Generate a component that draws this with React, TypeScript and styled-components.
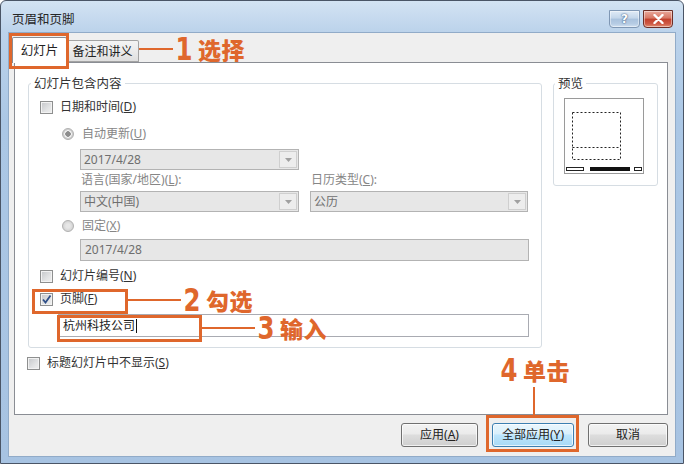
import styled, { createGlobalStyle } from 'styled-components'

const ORANGE = '#df672c'
const UI_FONT = '"Noto Sans", "Noto Sans CJK SC", sans-serif'
const CJK_FONT = '"Noto Sans CJK SC", sans-serif'

const GlobalStyle = createGlobalStyle`
  html, body {
    margin: 0;
    padding: 0;
    background: #ffffff;
  }
  body {
    font-family: ${UI_FONT};
  }
  * {
    box-sizing: border-box;
  }
`

const Window = styled.div`
  position: relative;
  width: 684px;
  height: 464px;
  display: flex;
  flex-direction: column;
  padding: 0 7px 6px 7px;
  border: 1px solid #4a5566;
  border-radius: 6px 6px 0 0;
  background: linear-gradient(180deg, #d3e3f3 0px, #bcd3eb 30px, #abc7e5 120px, #a7c3e2 100%);
`

const TitleBar = styled.div`
  height: 31px;
  display: flex;
  align-items: flex-start;
  padding: 0 3px 0 4px;
`

const Title = styled.div`
  flex: 1;
  margin-top: 10px;
  font-family: ${CJK_FONT};
  font-size: 12.5px;
  line-height: 16px;
  color: #262626;
`

const CaptionButtons = styled.div`
  display: flex;
  gap: 3px;
  margin-top: 9px;
`

const CaptionButton = styled.div<{ $close?: boolean }>`
  width: ${({ $close }) => ($close ? 30 : 31)}px;
  height: 18px;
  border-radius: 0 0 4px 4px;
  border: 1px solid ${({ $close }) => ($close ? '#6d2f27' : '#7f97b4')};
  display: flex;
  align-items: center;
  justify-content: center;
  background: ${({ $close }) =>
    $close
      ? 'linear-gradient(180deg, #eaa99b 0%, #d77764 45%, #c2402c 50%, #cf5a45 80%, #e18f73 100%)'
      : 'linear-gradient(180deg, #e0ebf6 0%, #c3d6ea 45%, #a9c2dd 50%, #b6cce4 80%, #d1e1f1 100%)'};
  box-shadow: inset 0 0 0 1px rgba(255, 255, 255, 0.45);
`

const HelpGlyph = styled.span`
  font-family: "DejaVu Sans", sans-serif;
  font-weight: bold;
  font-size: 12px;
  line-height: 12px;
  color: #ffffff;
  text-shadow: 0 0 2px #3d5a80, 0 0 1px #3d5a80;
`

const Client = styled.div`
  flex: 1;
  display: flex;
  flex-direction: column;
  background: #efefef;
  border: 1px solid #91abc8;
  padding: 0 7px 9px 5px;
`

const TabStrip = styled.div`
  height: 30px;
  display: flex;
  align-items: flex-end;
  margin-left: -2px;
  margin-bottom: -1px;
  position: relative;
  z-index: 1;
`

const Tab = styled.div<{ $active?: boolean }>`
  width: ${({ $active }) => ($active ? 55 : 72)}px;
  height: ${({ $active }) => ($active ? 26 : 22)}px;
  margin-bottom: ${({ $active }) => ($active ? 0 : 1)}px;
  border: 1px solid ${({ $active }) => ($active ? '#8a8d94' : '#a3a3a3')};
  border-bottom: ${({ $active }) => ($active ? 'none' : '1px solid #a3a3a3')};
  border-left: ${({ $active }) => ($active ? '1px solid #8a8d94' : 'none')};
  border-radius: 2px 2px 0 0;
  background: ${({ $active }) =>
    $active ? '#ffffff' : 'linear-gradient(180deg, #f4f4f4 0%, #ebebeb 50%, #dfdfdf 100%)'};
  display: flex;
  align-items: center;
  justify-content: center;
  padding-bottom: ${({ $active }) => ($active ? 2 : 0)}px;
  font-family: ${CJK_FONT};
  font-size: ${({ $active }) => ($active ? 12.5 : 12)}px;
  line-height: 16px;
  color: #222222;
`

const Panel = styled.div`
  height: 353px;
  background: #ffffff;
  border: 1px solid #8a8d94;
  padding: 12px 8px 0 13px;
`

const ContentRow = styled.div`
  display: flex;
  align-items: flex-start;
  gap: 11px;
`

const GroupBox = styled.fieldset<{ $w: number }>`
  width: ${({ $w }) => $w}px;
  min-width: 0;
  margin: 0;
  border: 1px solid #d6dde3;
  border-radius: 3px;
  display: flex;
  flex-direction: column;
  padding: 6px 11px 10px 11px;
`

const Legend = styled.legend`
  margin-left: -9px;
  padding: 0 3px;
  font-family: ${CJK_FONT};
  font-size: 12.5px;
  line-height: 16px;
  color: #333333;
`

const PreviewBox = styled(GroupBox)`
  padding: 7px 10px 11px 10px;
`

const OptionRow = styled.div<{ $mt?: number; $ml?: number }>`
  height: 20px;
  display: flex;
  align-items: center;
  gap: 7px;
  margin-top: ${({ $mt }) => $mt ?? 0}px;
  margin-left: ${({ $ml }) => $ml ?? 0}px;
`

const Label = styled.span<{ $disabled?: boolean }>`
  font-size: 12px;
  line-height: 16px;
  color: ${({ $disabled }) => ($disabled ? '#868686' : '#333333')};
  white-space: nowrap;

  u {
    text-underline-offset: 1px;
  }
`

const CheckBox = styled.span`
  width: 13px;
  height: 13px;
  flex-shrink: 0;
  border: 1px solid #8e8f8f;
  background: linear-gradient(135deg, #c4c6c9 0%, #e2e3e4 60%, #f0f0f0 100%);
  box-shadow: inset 0 0 0 1px #f2f2f2;
  display: flex;
  align-items: center;
  justify-content: center;
`

const Radio = styled.span<{ $on?: boolean }>`
  width: 12px;
  height: 12px;
  flex-shrink: 0;
  border-radius: 50%;
  border: 1px solid #b0b0b0;
  background: ${({ $on }) =>
    $on
      ? 'radial-gradient(circle, #8d8d8d 0 2.5px, #f4f4f4 3px 3.5px, #cfcfcf 4px)'
      : 'radial-gradient(circle, #e6e6e6 0 2px, #d3d3d3 5px)'};
  margin-right: 1px;
`

const Combo = styled.div<{ $w: number; $mt?: number; $ml?: number }>`
  width: ${({ $w }) => $w}px;
  height: 21px;
  flex-shrink: 0;
  margin-top: ${({ $mt }) => $mt ?? 0}px;
  margin-left: ${({ $ml }) => $ml ?? 0}px;
  display: flex;
  border: 1px solid #b3b3b3;
  background: #e7e7e7;
`

const ComboText = styled.span`
  flex: 1;
  padding-left: 3px;
  font-size: 12px;
  line-height: 19px;
  color: #6f6f6f;
`

const ComboArrow = styled.span`
  width: 18px;
  margin: 1px;
  border: 1px solid #cfcfcf;
  background: #ededed;
  display: flex;
  align-items: center;
  justify-content: center;
`

const FieldGrid = styled.div<{ $mt: number }>`
  display: grid;
  grid-template-columns: 219px 218px;
  column-gap: 11px;
  margin-top: ${({ $mt }) => $mt}px;
  margin-left: 40px;
`

const FieldLabel = styled(Label)`
  padding-left: 1px;
`

const TextField = styled.div<{ $w: number; $mt: number; $ml: number; $enabled?: boolean }>`
  width: ${({ $w }) => $w}px;
  height: ${({ $enabled }) => ($enabled ? 23 : 22)}px;
  margin-top: ${({ $mt }) => $mt}px;
  margin-left: ${({ $ml }) => $ml}px;
  border: 1px solid ${({ $enabled }) => ($enabled ? '#a9abb2' : '#b3b3b3')};
  background: ${({ $enabled }) => ($enabled ? '#ffffff' : '#e7e7e7')};
  padding-left: 4px;
  display: flex;
  align-items: center;
  font-size: 12px;
  line-height: 16px;
  color: ${({ $enabled }) => ($enabled ? '#222222' : '#6f6f6f')};
`

const Caret = styled.span`
  width: 1px;
  height: 14px;
  margin-left: 1px;
  background: #111111;
`

const ButtonRow = styled.div`
  display: flex;
  justify-content: flex-end;
  gap: 14px;
  margin-top: 8px;
`

const Button = styled.div<{ $w: number; $default?: boolean }>`
  width: ${({ $w }) => $w}px;
  height: 24px;
  border-radius: 3px;
  border: 1px solid ${({ $default }) => ($default ? '#3c7fb1' : '#707070')};
  background: ${({ $default }) =>
    $default
      ? 'linear-gradient(180deg, #eaf6fd 0%, #d9f0fc 45%, #bee6fd 50%, #a7d9f5 100%)'
      : 'linear-gradient(180deg, #f2f2f2 0%, #ebebeb 45%, #dddddd 50%, #cfcfcf 100%)'};
  box-shadow: inset 0 0 0 1px rgba(255, 255, 255, 0.7);
  display: flex;
  align-items: center;
  justify-content: center;
  font-size: 12px;
  line-height: 16px;
  color: #222222;
`

/* orange annotation overlays */

const Highlight = styled.div<{ $x: number; $y: number; $w: number; $h: number }>`
  position: absolute;
  left: ${({ $x }) => $x - 1}px;
  top: ${({ $y }) => $y - 1}px;
  width: ${({ $w }) => $w}px;
  height: ${({ $h }) => $h}px;
  border: 3px solid ${ORANGE};
  pointer-events: none;
  z-index: 5;
`

const Callout = styled.div<{ $x: number; $y: number }>`
  position: absolute;
  left: ${({ $x }) => $x - 1}px;
  top: ${({ $y }) => $y - 16}px;
  height: 30px;
  display: flex;
  align-items: center;
  pointer-events: none;
  z-index: 5;
`

const Leader = styled.span<{ $w: number }>`
  width: ${({ $w }) => $w}px;
  height: 2px;
  background: ${ORANGE};
  margin-right: 2px;
`

const VLeader = styled.div<{ $x: number; $y: number; $h: number }>`
  position: absolute;
  left: ${({ $x }) => $x - 1}px;
  top: ${({ $y }) => $y - 1}px;
  width: 2px;
  height: ${({ $h }) => $h}px;
  background: ${ORANGE};
  z-index: 5;
`

const StepNum = styled.span`
  display: inline-block;
  font-family: "DejaVu Sans Condensed", "DejaVu Sans", sans-serif;
  font-weight: bold;
  font-size: 32px;
  line-height: 30px;
  color: ${ORANGE};
  transform: scaleX(0.85);
  margin: 0 4px 0 -1px;
`

const StepText = styled.span`
  font-family: ${CJK_FONT};
  font-weight: 900;
  font-size: 23px;
  line-height: 30px;
  letter-spacing: 0.5px;
  color: ${ORANGE};
`

function ArrowDown() {
  return (
    <svg width="7" height="4" viewBox="0 0 7 4">
      <path d="M0 0 H7 L3.5 4 Z" fill="#a0a0a0" />
    </svg>
  )
}

function Tick() {
  return (
    <svg width="11" height="11" viewBox="0 0 11 11">
      <path d="M2 5.5 L4.5 8.5 L9.5 1.5" fill="none" stroke="#2f4f88" strokeWidth="1.8" />
    </svg>
  )
}

function CloseGlyph() {
  return (
    <svg width="11" height="10" viewBox="0 0 11 10">
      <path d="M1.5 1 L9.5 9 M9.5 1 L1.5 9" stroke="#ffffff" strokeWidth="2.4" strokeLinecap="round" />
    </svg>
  )
}

function SlidePreview() {
  return (
    <svg width="80" height="76" viewBox="0 0 80 76">
      <rect x="0.5" y="0.5" width="79" height="75" fill="#ffffff" stroke="#9a9a9a" />
      <rect x="8.5" y="14.5" width="48" height="47" fill="none" stroke="#222" strokeDasharray="2 2" />
      <line x1="8.5" y1="49.5" x2="56.5" y2="49.5" stroke="#222" strokeDasharray="2 2" />
      <rect x="2.5" y="69.5" width="17" height="3" fill="#fff" stroke="#222" />
      <rect x="26" y="69" width="40" height="4" fill="#111" />
      <rect x="70.5" y="69.5" width="7" height="3" fill="#fff" stroke="#222" />
    </svg>
  )
}

export default function App() {
  return (
    <>
      <GlobalStyle />
      <Window>
        <TitleBar>
          <Title>页眉和页脚</Title>
          <CaptionButtons>
            <CaptionButton>
              <HelpGlyph>?</HelpGlyph>
            </CaptionButton>
            <CaptionButton $close>
              <CloseGlyph />
            </CaptionButton>
          </CaptionButtons>
        </TitleBar>

        <Client>
          <TabStrip>
            <Tab $active>幻灯片</Tab>
            <Tab>备注和讲义</Tab>
          </TabStrip>

          <Panel>
            <ContentRow>
              <GroupBox $w={514}>
                <Legend>幻灯片包含内容</Legend>

                <OptionRow>
                  <CheckBox />
                  <Label>
                    日期和时间(<u>D</u>)
                  </Label>
                </OptionRow>

                <OptionRow $mt={7} $ml={22}>
                  <Radio $on />
                  <Label $disabled>
                    自动更新(<u>U</u>)
                  </Label>
                </OptionRow>

                <Combo $w={219} $mt={5} $ml={40}>
                  <ComboText>2017/4/28</ComboText>
                  <ComboArrow>
                    <ArrowDown />
                  </ComboArrow>
                </Combo>

                <FieldGrid $mt={2}>
                  <FieldLabel $disabled>
                    语言(国家/地区)(<u>L</u>):
                  </FieldLabel>
                  <FieldLabel $disabled>
                    日历类型(<u>C</u>):
                  </FieldLabel>
                </FieldGrid>

                <FieldGrid $mt={3}>
                  <Combo $w={219}>
                    <ComboText>中文(中国)</ComboText>
                    <ComboArrow>
                      <ArrowDown />
                    </ComboArrow>
                  </Combo>
                  <Combo $w={218}>
                    <ComboText>公历</ComboText>
                    <ComboArrow>
                      <ArrowDown />
                    </ComboArrow>
                  </Combo>
                </FieldGrid>

                <OptionRow $mt={4} $ml={22}>
                  <Radio />
                  <Label $disabled>
                    固定(<u>X</u>)
                  </Label>
                </OptionRow>

                <TextField $w={449} $mt={3} $ml={40}>
                  2017/4/28
                </TextField>

                <OptionRow $mt={5}>
                  <CheckBox />
                  <Label>
                    幻灯片编号(<u>N</u>)
                  </Label>
                </OptionRow>

                <OptionRow $mt={3}>
                  <CheckBox>
                    <Tick />
                  </CheckBox>
                  <Label>
                    页脚(<u>F</u>)
                  </Label>
                </OptionRow>

                <TextField $w={471} $mt={5} $ml={18} $enabled>
                  杭州科技公司
                  <Caret />
                </TextField>
              </GroupBox>

              <PreviewBox $w={105}>
                <Legend>预览</Legend>
                <SlidePreview />
              </PreviewBox>
            </ContentRow>

            <OptionRow $mt={5} $ml={-1}>
              <CheckBox />
              <Label>
                标题幻灯片中不显示(<u>S</u>)
              </Label>
            </OptionRow>
          </Panel>

          <ButtonRow>
            <Button $w={77}>
              应用(<u>A</u>)
            </Button>
            <Button $w={82} $default>
              全部应用(<u>Y</u>)
            </Button>
            <Button $w={80}>取消</Button>
          </ButtonRow>
        </Client>

        <Highlight $x={9} $y={33} $w={60} $h={36} />
        <Callout $x={139} $y={49}>
          <Leader $w={34} />
          <StepNum>1</StepNum>
          <StepText>选择</StepText>
        </Callout>

        <Highlight $x={32} $y={289} $w={96} $h={25} />
        <Callout $x={128} $y={300}>
          <Leader $w={53} />
          <StepNum>2</StepNum>
          <StepText>勾选</StepText>
        </Callout>

        <Highlight $x={57} $y={315} $w={145} $h={27} />
        <Callout $x={202} $y={328}>
          <Leader $w={53} />
          <StepNum>3</StepNum>
          <StepText>输入</StepText>
        </Callout>

        <Callout $x={500} $y={370}>
          <StepNum>4</StepNum>
          <StepText>单击</StepText>
        </Callout>
        <VLeader $x={533} $y={387} $h={29} />
        <Highlight $x={486} $y={415} $w={93} $h={37} />
      </Window>
    </>
  )
}
